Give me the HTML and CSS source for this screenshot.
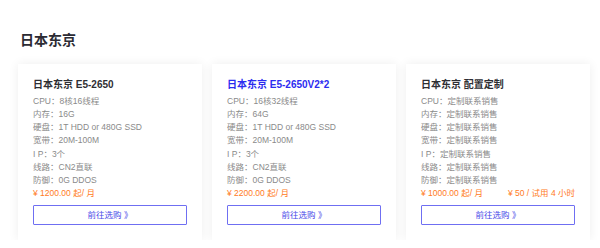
FILE: index.html
```html
<!DOCTYPE html>
<html lang="zh-CN">
<head>
    <meta charset="UTF-8">
    <meta name="viewport" content="width=device-width, initial-scale=1.0">
    <title>日本东京</title>
    <link rel="stylesheet" href="styles.css">
</head>
<body>
    <div class="container">
        <h2 class="region-title">日本东京</h2>
        <div class="plans">
            <div class="plan">
                <h3 class="plan-name">日本东京 E5-2650</h3>
                <ul class="specs">
                    <li>CPU：8核16线程</li>
                    <li>内存：16G</li>
                    <li>硬盘：1T HDD or 480G SSD</li>
                    <li>宽带：20M-100M</li>
                    <li>I P：3个</li>
                    <li>线路：CN2直联</li>
                    <li>防御：0G DDOS</li>
                </ul>
                <div class="price"><span>¥ 1200.00 起/ 月</span></div>
                <a class="buy-btn" href="#">前往选购 》</a>
            </div>
            <div class="plan">
                <h3 class="plan-name active">日本东京 E5-2650V2*2</h3>
                <ul class="specs">
                    <li>CPU：16核32线程</li>
                    <li>内存：64G</li>
                    <li>硬盘：1T HDD or 480G SSD</li>
                    <li>宽带：20M-100M</li>
                    <li>I P：3个</li>
                    <li>线路：CN2直联</li>
                    <li>防御：0G DDOS</li>
                </ul>
                <div class="price"><span>¥ 2200.00 起/ 月</span></div>
                <a class="buy-btn" href="#">前往选购 》</a>
            </div>
            <div class="plan">
                <h3 class="plan-name">日本东京 配置定制</h3>
                <ul class="specs">
                    <li>CPU：定制联系销售</li>
                    <li>内存：定制联系销售</li>
                    <li>硬盘：定制联系销售</li>
                    <li>宽带：定制联系销售</li>
                    <li>I P：定制联系销售</li>
                    <li>线路：定制联系销售</li>
                    <li>防御：定制联系销售</li>
                </ul>
                <div class="price"><span>¥ 1000.00 起/ 月</span><span>¥ 50 / 试用 4 小时</span></div>
                <a class="buy-btn" href="#">前往选购 》</a>
            </div>
        </div>
    </div>
</body>
</html>
```

FILE: styles.css
```css
body {
    margin: 0;
    padding: 0;
    background: #fff;
    font-family: "Liberation Sans", "Noto Sans CJK SC", sans-serif;
    color: #333;
}
.container {
    padding: 0 10px 0 18px;
}
.region-title {
    margin: 0;
    padding: 30px 0 0 2px;
    height: 34px;
    font-size: 14px;
    line-height: 20px;
    font-weight: bold;
    color: #2b2b33;
}
.plans {
    display: flex;
    gap: 10px;
}
.plan {
    width: 184px;
    box-sizing: border-box;
    padding: 13px 15px 15px;
    background: #fff;
    box-shadow: 0 0 10px rgba(0, 0, 0, 0.07);
}
.plan-name {
    margin: 0 0 2px;
    font-size: 10px;
    line-height: 16px;
    font-weight: bold;
    color: #2e2e33;
}
.plan-name.active {
    color: #2c2cf0;
}
.specs {
    list-style: none;
    margin: 0;
    padding: 0;
}
.specs li,
.price {
    font-size: 8.5px;
    line-height: 13.15px;
    color: #8a8a8a;
    white-space: nowrap;
}
.price {
    display: flex;
    justify-content: space-between;
    color: #ff7b24;
}
.buy-btn {
    display: block;
    margin-top: 5px;
    height: 20px;
    box-sizing: border-box;
    border: 1px solid #6f6ff2;
    border-radius: 1px;
    text-align: center;
    font-size: 8.5px;
    line-height: 18px;
    color: #4a4ae8;
    text-decoration: none;
}
```
